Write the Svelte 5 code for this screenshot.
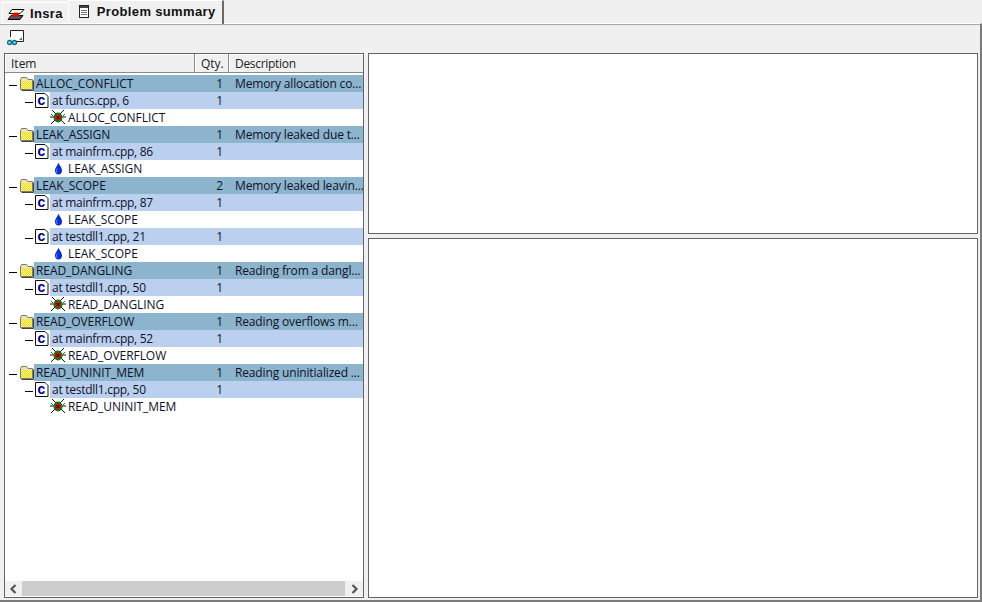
<script>
	const rows = [
		{ level: 0, name: 'ALLOC_CONFLICT', qty: 1, desc: 'Memory allocation co...' },
		{ level: 1, name: 'at funcs.cpp, 6', qty: 1 },
		{ level: 2, name: 'ALLOC_CONFLICT', icon: 'bug' },
		{ level: 0, name: 'LEAK_ASSIGN', qty: 1, desc: 'Memory leaked due t...' },
		{ level: 1, name: 'at mainfrm.cpp, 86', qty: 1 },
		{ level: 2, name: 'LEAK_ASSIGN', icon: 'drop' },
		{ level: 0, name: 'LEAK_SCOPE', qty: 2, desc: 'Memory leaked leavin...' },
		{ level: 1, name: 'at mainfrm.cpp, 87', qty: 1 },
		{ level: 2, name: 'LEAK_SCOPE', icon: 'drop' },
		{ level: 1, name: 'at testdll1.cpp, 21', qty: 1 },
		{ level: 2, name: 'LEAK_SCOPE', icon: 'drop' },
		{ level: 0, name: 'READ_DANGLING', qty: 1, desc: 'Reading from a dangl...' },
		{ level: 1, name: 'at testdll1.cpp, 50', qty: 1 },
		{ level: 2, name: 'READ_DANGLING', icon: 'bug' },
		{ level: 0, name: 'READ_OVERFLOW', qty: 1, desc: 'Reading overflows m...' },
		{ level: 1, name: 'at mainfrm.cpp, 52', qty: 1 },
		{ level: 2, name: 'READ_OVERFLOW', icon: 'bug' },
		{ level: 0, name: 'READ_UNINIT_MEM', qty: 1, desc: 'Reading uninitialized ...' },
		{ level: 1, name: 'at testdll1.cpp, 50', qty: 1 },
		{ level: 2, name: 'READ_UNINIT_MEM', icon: 'bug' }
	];
</script>

<div class="window">
	<div class="tabs">
		<div class="tab">
			<svg width="18" height="14" viewBox="0 0 18 14">
				<path d="M5 2.500h12l-4 4H2z" fill="#fff" stroke="#000" />
				<path d="M1 12.500l3-4h12l-3 4z" fill="#555" stroke="#000" />
				<path d="M6 6h6v3.500H5z" fill="#d01010" />
				<path d="M7 5h4v1H7z" fill="#f0c000" />
			</svg>
			<span>Insra</span>
		</div>
		<div class="tab active">
			<svg width="12" height="15" viewBox="0 0 12 15">
				<rect x="1.500" y="1.500" width="9" height="12" fill="#fff" stroke="#222" />
				<rect x="2" y="2" width="8" height="2" fill="#444" />
				<path d="M3 6.500h6M3 8.500h6M3 10.500h6" stroke="#777" />
			</svg>
			<span>Problem summary</span>
		</div>
	</div>

	<div class="panel">
		<div class="toolbar">
			<svg width="18" height="17" viewBox="0 0 18 17">
				<path d="M3.500 7V.5H16.500V11.500H9" fill="#fff" stroke="#222" />
				<path d="M12 10l3-3v3z" fill="#666" />
				<circle cx="2.500" cy="12.500" r="2" fill="#8fd8e8" stroke="#007080" stroke-width="1.300" />
				<circle cx="7.500" cy="12.500" r="2" fill="#8fd8e8" stroke="#007080" stroke-width="1.300" />
			</svg>
		</div>

		<div class="panes">
			<div class="tree">
				<div class="head">
					<div class="col col-item">Item</div>
					<div class="col col-qty">Qty.</div>
					<div class="col col-desc">Description</div>
				</div>
				<div class="body">
					{#each rows as row}
						<div class="row lvl{row.level}">
							{#if row.level < 2}
								<span class="toggle"></span>
							{/if}
							{#if row.level === 0}
								<svg class="ico" width="15" height="15" viewBox="0 0 15 15">
									<defs>
										<pattern id="dither" width="2" height="2" patternUnits="userSpaceOnUse">
											<rect width="2" height="2" fill="#efd820" />
											<rect width="1" height="1" fill="#fff690" />
											<rect x="1" y="1" width="1" height="1" fill="#fff690" />
										</pattern>
									</defs>
									<path d="M1.500 13.500V3.500L2.500 1.500H7.500L9 3.500H13.500V13.500Z" fill="#e8e4b8" stroke="#7c7c60" />
									<rect x="2" y="5" width="11" height="8" fill="url(#dither)" />
									<path d="M14.500 4.500v10H2.500" fill="none" stroke="#444" />
								</svg>
							{:else if row.level === 1}
								<svg class="ico" width="15" height="15" viewBox="0 0 15 15">
									<path d="M.5 .5H10L13 3.500V14.500H.5Z" fill="#fff" stroke="#111" />
									<text class="c" x="6.500" y="11.500">c</text>
								</svg>
							{:else if row.icon === 'bug'}
								<svg class="ico" width="16" height="15" viewBox="0 0 16 15">
									<path d="M2 0l4 4M14 0l-4 4M0 7h4M16 7h-4M1 14l4-4M15 14l-4-4" stroke="#111" fill="none" />
									<path d="M1 4l2 2M15 4l-2 2" stroke="#0a8a20" />
									<ellipse cx="8" cy="7.500" rx="4.500" ry="5" fill="#0c7a1c" />
									<circle cx="8" cy="7.500" r="3" fill="#d81010" />
									<path d="M6.500 6l3 3M9.500 6l-3 3" stroke="#111" />
								</svg>
							{:else}
								<svg class="ico" width="16" height="15" viewBox="0 0 16 15">
									<path d="M8.500 1.500C9 4 12 6 12 9.500C12 12 10.500 13.500 8.500 13.500C6.500 13.500 5 12 5 9.500C5 7 7 5.500 8.500 1.500Z" fill="#0a2cd0" />
									<path d="M7.300 7.500C6.300 9 6.300 10.500 7.300 12" stroke="#4f98ff" fill="none" />
								</svg>
							{/if}
							<div class="bar">
								<span class="name">{row.name}</span>
								<span class="qty">{row.qty ?? ''}</span>
								<span class="desc">{row.desc ?? ''}</span>
							</div>
						</div>
					{/each}
				</div>
				<div class="hscroll">
					<div class="arrow">
						<svg width="9" height="10" viewBox="0 0 9 10"><path d="M6.500 1L2.500 5L6.500 9" fill="none" stroke="#555" stroke-width="2.200" /></svg>
					</div>
					<div class="thumb"></div>
					<div class="arrow right">
						<svg width="9" height="10" viewBox="0 0 9 10"><path d="M2.500 1L6.500 5L2.500 9" fill="none" stroke="#555" stroke-width="2.200" /></svg>
					</div>
				</div>
			</div>

			<div class="side">
				<div class="box top"></div>
				<div class="box bottom"></div>
			</div>
		</div>
	</div>
</div>

<style>
	:global(body) {
		background: #f0f0f0;
	}
	.window {
		width: 982px;
		height: 602px;
		display: flex;
		flex-direction: column;
		overflow: hidden;
		box-sizing: border-box;
		font-family: "Open Sans", "Noto Sans", sans-serif;
		font-size: 12px;
		color: #10102a;
	}
	.tabs {
		height: 23px;
		display: flex;
		padding-left: 2px;
		flex: none;
	}
	.tab {
		display: flex;
		align-items: center;
		gap: 5px;
		height: 22px;
		margin-top: 2px;
		padding: 0 5px 0 4px;
		box-sizing: border-box;
		border-top: 1px solid #fff;
		border-left: 1px solid #fff;
		font-family: "Liberation Sans", sans-serif;
		font-weight: bold;
		font-size: 13px;
		letter-spacing: 0.35px;
		color: #111;
	}
	.tab.active {
		height: 24px;
		margin-top: 0;
		padding: 0 6px 2px 9px;
		gap: 7px;
		border-right: 2px solid #6a6a6a;
		position: relative;
		z-index: 1;
	}
	.panel {
		flex: 1;
		display: flex;
		flex-direction: column;
		border-top: 1px solid #fff;
		box-shadow: inset 0 1px 0 #a8a8a8;
		border-right: 2px solid #7a7a7a;
		border-bottom: 2px solid #7a7a7a;
		min-height: 0;
	}
	.toolbar {
		height: 29px;
		flex: none;
		padding: 6px 0 0 7px;
		box-sizing: border-box;
	}
	.toolbar svg {
		display: block;
	}
	.panes {
		flex: 1;
		display: flex;
		gap: 4px;
		padding: 0 2px 2px 4px;
		min-height: 0;
	}
	.tree {
		width: 360px;
		flex: none;
		display: flex;
		flex-direction: column;
		box-sizing: border-box;
		border: 1px solid #646464;
		background: #fff;
	}
	.head {
		display: flex;
		height: 19px;
		flex: none;
		background: #f0f0f0;
		border-bottom: 1px solid #fff;
	}
	.col {
		box-sizing: border-box;
		padding: 1px 0 0 6px;
		border-right: 1px solid #8a8a8a;
		border-bottom: 1px solid #8a8a8a;
		box-shadow: inset 1px 1px 0 #fff;
		color: #222;
	}
	.col-item {
		width: 190px;
	}
	.col-qty {
		width: 34px;
	}
	.col-desc {
		flex: 1;
		border-right: none;
		letter-spacing: -0.3px;
	}
	.body {
		flex: 1;
		min-height: 0;
		padding-top: 1px;
	}
	.row {
		height: 17px;
		display: flex;
		align-items: center;
		line-height: 17px;
	}
	.lvl0 {
		padding-left: 4px;
	}
	.lvl1 {
		padding-left: 20px;
	}
	.lvl2 {
		padding-left: 45px;
	}
	.toggle {
		width: 8px;
		height: 1px;
		background: #000;
		flex: none;
		margin: 3px 2px 0 0;
	}
	.ico {
		flex: none;
	}
	.lvl2 .ico {
		margin-right: 2px;
	}
	.bar {
		flex: 1;
		height: 17px;
		display: flex;
		min-width: 0;
	}
	.lvl0 .bar {
		background: #8cb4cc;
	}
	.lvl1 .bar {
		background: #bbd0ee;
	}
	.name {
		flex: 1;
		padding-left: 2px;
		white-space: nowrap;
		letter-spacing: -0.07px;
	}
	.lvl1 .name {
		letter-spacing: -0.27px;
	}
	.lvl2 .name {
		padding-left: 0;
	}
	.qty {
		width: 30px;
		text-align: right;
		padding-right: 6px;
		box-sizing: border-box;
		flex: none;
	}
	.desc {
		width: 134px;
		flex: none;
		padding-left: 6px;
		box-sizing: border-box;
		white-space: nowrap;
		letter-spacing: -0.15px;
	}
	.hscroll {
		height: 15px;
		flex: none;
		display: flex;
		background: #f0f0f0;
		margin-bottom: 1px;
	}
	.arrow {
		width: 17px;
		display: flex;
		align-items: center;
		justify-content: center;
		flex: none;
	}
	.arrow.right {
		width: 18px;
	}
	.thumb {
		flex: 1;
		background: #cdcdcd;
	}
	.side {
		flex: 1;
		display: flex;
		flex-direction: column;
		gap: 4px;
		min-width: 0;
	}
	.box {
		box-sizing: border-box;
		border: 1px solid #646464;
		background: #fff;
	}
	.top {
		height: 181px;
		flex: none;
	}
	.bottom {
		flex: 1;
	}
	.c {
		font-family: "Liberation Mono", monospace;
		font-weight: bold;
		font-size: 14px;
		text-anchor: middle;
		fill: #00008a;
	}
</style>
